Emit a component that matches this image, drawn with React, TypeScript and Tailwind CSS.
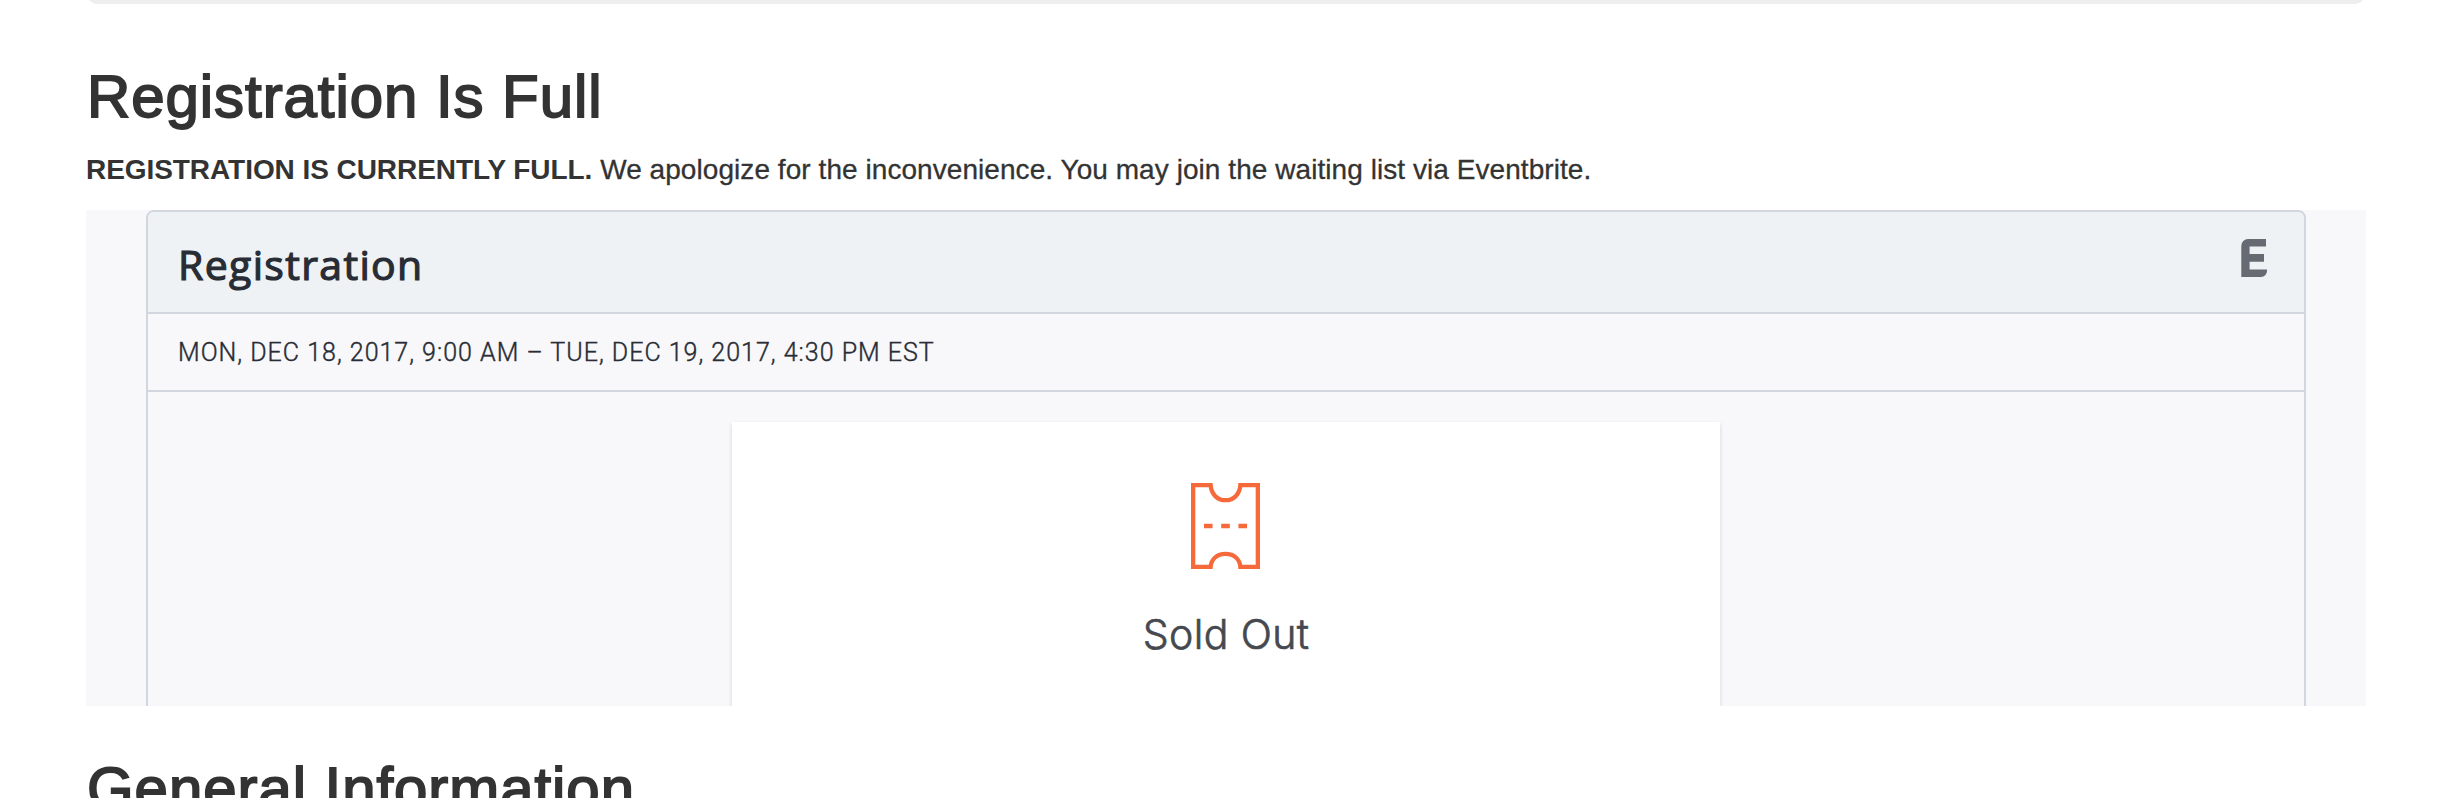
import React from "react";

function TicketIcon() {
  return (
    <svg className="mr-px block h-[86px] w-[69px]" viewBox="0 0 16 20" fill="none" stroke="#f6693a" preserveAspectRatio="none">
      <path d="M.5 .5H4.55C4.7 2.5 6 4 8 4S11.3 2.5 11.45 .5H15.5V19.5H11.45C11.3 17.7 10 16.5 8 16.5S4.7 17.7 4.55 19.5H.5Z" />
      <path d="M3 10H5M7 10H9M11 10H13" />
    </svg>
  );
}

function BrandMark() {
  return (
    <svg className="block h-[38px] w-[26px]" viewBox="0 0 26 38" fill="#666a73">
      <path d="M7 0H25V7.6H8.6V15H23V22.8H8.6V30.5H26V32A6 6 0 0 1 20 38H.3V6.700A6.700 6.700 0 0 1 7 0Z" />
    </svg>
  );
}

function SectionHeading({ children }: { children: React.ReactNode }) {
  return (
    <h2 className="pl-px text-[60px] leading-[80px] tracking-[0.93px] whitespace-nowrap text-[#333333] [-webkit-text-stroke:1.8px_#333333]">
      {children}
    </h2>
  );
}

export default function App() {
  return (
    <div className="flex h-[798px] w-[2448px] flex-col overflow-hidden bg-white pr-[82px] pl-[86px] font-['Liberation_Sans',Arial,sans-serif]">
      <div className="h-1 shrink-0 overflow-hidden">
        <div className="-mt-5 h-6 rounded-[12px] bg-[#eeeeee]" />
      </div>
      <div className="mt-[53px] shrink-0">
        <SectionHeading>Registration Is Full</SectionHeading>
      </div>
      <p className="mt-[13px] h-[60px] shrink-0 text-[28px] leading-[40px] whitespace-nowrap text-[#333333]">
        <strong className="tracking-[-0.06px]">REGISTRATION IS CURRENTLY FULL.</strong>
        <span className="tracking-[0.06px] [-webkit-text-stroke:0.3px_#333333]"> We apologize for the inconvenience. You may join the waiting list via Eventbrite.</span>
      </p>
      <section className="h-[496px] shrink-0 overflow-hidden bg-[#f8f8fa] px-[60px]">
        <div className="flex h-[520px] flex-col rounded-t-[8px] border-2 border-[#d2d6df]">
          <header className="flex h-[102px] shrink-0 items-start justify-between rounded-t-[6px] border-b-2 border-[#d2d6df] bg-[#eef2f5] pr-[37px] pl-[30px]">
            <h3 className="mt-6 font-['Open_Sans',sans-serif] text-[41px] leading-[56px] font-normal tracking-[1.35px] text-[#282c35] [-webkit-text-stroke:1.2px_#282c35]">
              Registration
            </h3>
            <div className="mt-[27px]">
              <BrandMark />
            </div>
          </header>
          <div className="flex h-[78px] shrink-0 items-center border-b-2 border-[#d2d6df] pt-[2px] pl-[30px] font-['Roboto',sans-serif] text-[25px] font-light tracking-[1px] text-[#282c35] [-webkit-text-stroke:0.4px_#282c35]">
            MON, DEC 18, 2017, 9:00 AM – TUE, DEC 19, 2017, 4:30 PM EST
          </div>
          <div className="mt-[30px] ml-[584px] flex w-[988px] grow flex-col items-center bg-white pt-[61px] shadow-[0_2px_4px_rgba(0,0,0,0.15)]">
            <TicketIcon />
            <p className="mt-[37px] font-['Inter',sans-serif] text-[41px] leading-[56px] font-light tracking-[0.4px] text-[#45494f] [-webkit-text-stroke:0.7px_#45494f]">
              Sold Out
            </p>
          </div>
        </div>
      </section>
      <div className="mt-[43px] shrink-0">
        <SectionHeading>General Information</SectionHeading>
      </div>
    </div>
  );
}
